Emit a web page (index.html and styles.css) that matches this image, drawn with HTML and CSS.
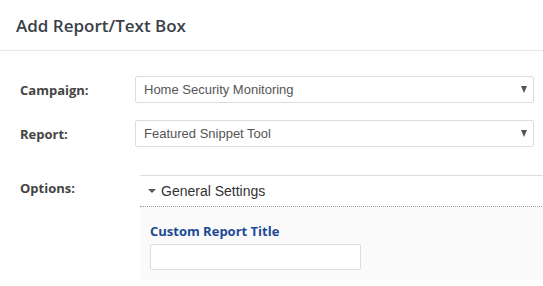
FILE: index.html
```html
<!DOCTYPE html>
<html lang="en">
<head>
    <meta charset="UTF-8">
    <title>Add Report/Text Box</title>
    <link rel="stylesheet" href="styles.css">
</head>
<body>
    <div class="modal-header">
        <h3>Add Report/Text Box</h3>
    </div>
    <form class="modal-body">
        <div class="form-row">
            <label class="row-label">Campaign:</label>
            <div class="select-box">
                <span>Home Security Monitoring</span>
                <span class="caret"></span>
            </div>
        </div>
        <div class="form-row">
            <label class="row-label">Report:</label>
            <div class="select-box">
                <span>Featured Snippet Tool</span>
                <span class="caret"></span>
            </div>
        </div>
        <div class="form-row options-row">
            <label class="row-label">Options:</label>
            <div class="panel">
                <div class="panel-head">
                    <span class="caret small"></span>
                    General Settings
                </div>
                <div class="panel-body">
                    <div class="field-label">Custom Report Title</div>
                    <input type="text" class="text-input">
                </div>
            </div>
        </div>
    </form>
</body>
</html>
```

FILE: styles.css
```css
/* Base */
body {
    margin: 0;
    background: #fff;
    font-family: "Open Sans", sans-serif;
    color: #444;
    overflow: hidden;
}
/* Header */
.modal-header {
    height: 50px;
    padding: 0 16px;
    border-bottom: 1px solid #e8e8e8;
    display: flex;
    align-items: center;
}
.modal-header h3 {
    margin: 0;
    font-size: 17px;
    font-weight: 600;
    color: #3a3f48;
}
/* Rows */
.modal-body {
    padding: 25px 9px 0 20px;
}
.form-row {
    display: flex;
    align-items: center;
    margin-bottom: 17px;
}
.row-label {
    width: 115px;
    font-size: 13px;
    font-weight: 700;
    color: #444;
}
.select-box {
    flex: 1;
    height: 25px;
    border: 1px solid #ddd;
    border-radius: 2px;
    display: flex;
    align-items: center;
    justify-content: space-between;
    padding: 0 6px 0 8px;
    font-family: "Liberation Sans", Arial, sans-serif;
    font-size: 13px;
    color: #555;
}
.caret {
    width: 0;
    height: 0;
    border-left: 3.5px solid transparent;
    border-right: 3.5px solid transparent;
    border-top: 7px solid #555;
}
.caret.small {
    border-left-width: 4px;
    border-right-width: 4px;
    border-top: 4px solid #555;
    margin-right: 5px;
}
/* Options panel */
.options-row {
    align-items: flex-start;
    margin-top: 28px;
    margin-bottom: 0;
}
.options-row .row-label {
    width: 120px;
    padding-top: 4px;
}
.panel {
    flex: 1;
    margin-right: -20px;
    border-top: 1px solid #ddd;
}
.panel-head {
    height: 30px;
    display: flex;
    align-items: center;
    padding-left: 8px;
    border-bottom: 1px dotted #999;
    font-family: "Liberation Sans", Arial, sans-serif;
    font-size: 14px;
    color: #333;
}
.panel-body {
    background: #fafafa;
    padding: 15px 10px 10px;
}
.field-label {
    font-size: 13px;
    font-weight: 700;
    color: #1c4995;
    margin-bottom: 4px;
}
.text-input {
    display: block;
    width: 211px;
    height: 26px;
    box-sizing: border-box;
    border: 1px solid #ddd;
    border-radius: 2px;
    background: #fff;
}
```
